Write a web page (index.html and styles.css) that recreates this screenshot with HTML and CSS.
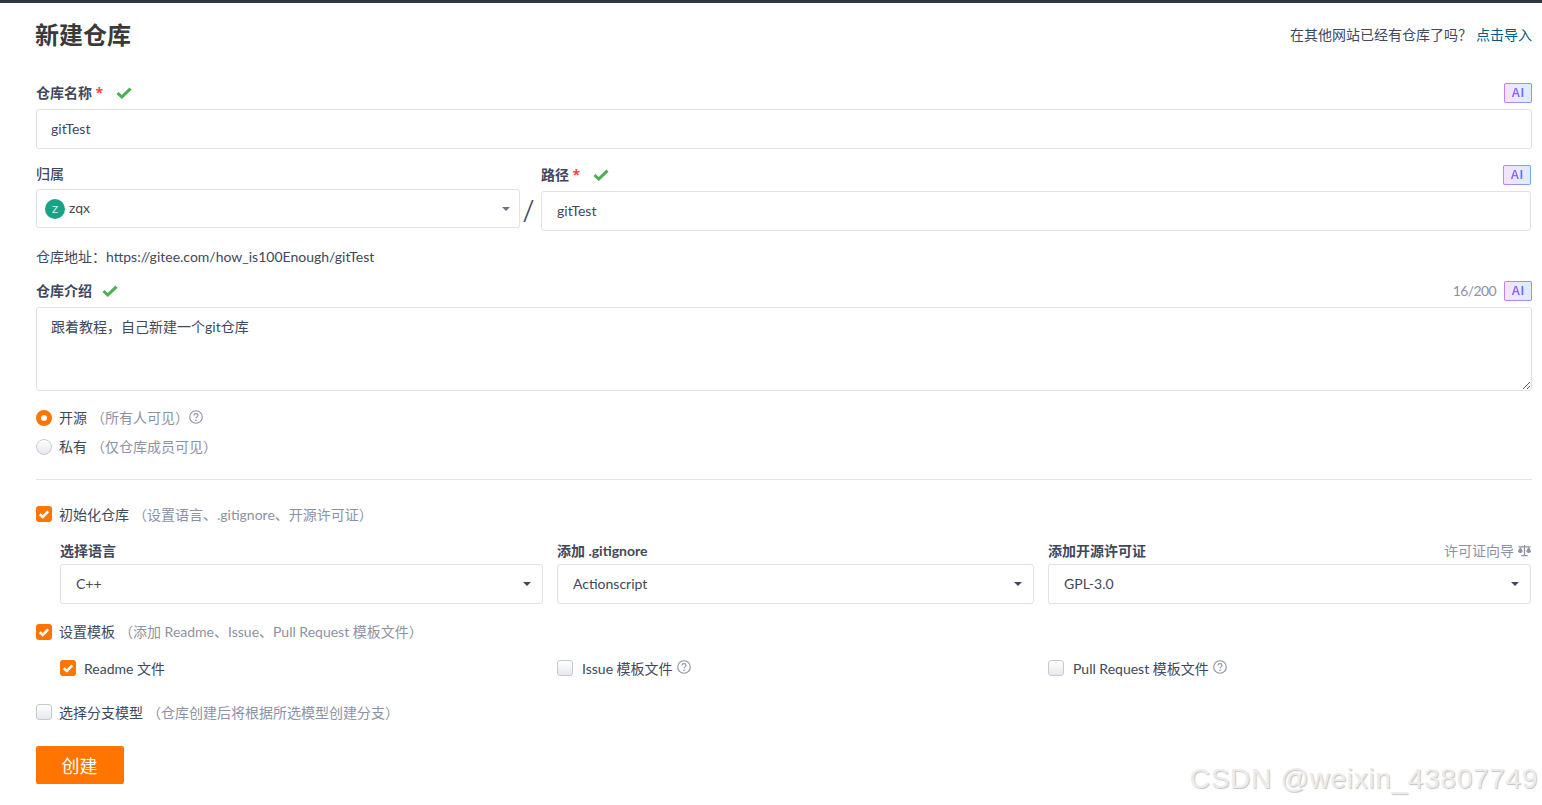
FILE: index.html
```html
<!DOCTYPE html>
<html lang="zh-CN">
<head>
<meta charset="utf-8">
<title>新建仓库</title>
<link rel="stylesheet" href="styles.css">
</head>
<body>
<div class="topbar"></div>
<main class="page">
  <header class="head">
    <h1 class="title">新建仓库</h1>
    <p class="import">在其他网站已经有仓库了吗？<a class="import-link">点击导入</a></p>
  </header>

  <div class="label-row first-label">
    <span class="label">仓库名称 <em class="req">*</em></span>
    <svg class="ok" viewBox="0 0 16 12"><path d="M1.5 6 5.8 10 14.5 1.6"/></svg>
    <span class="spacer"></span>
    <span class="ai"><span class="ai-text">AI</span></span>
  </div>
  <input class="box input" value="gitTest">

  <div class="owner-row">
    <div class="owner-col">
      <div class="label-row"><span class="label light">归属</span></div>
      <div class="box select owner-select">
        <span class="avatar">Z</span><span class="owner-name">zqx</span>
        <span class="caret muted"></span>
      </div>
    </div>
    <span class="slash">/</span>
    <div class="path-col">
      <div class="label-row">
        <span class="label">路径 <em class="req">*</em></span>
        <svg class="ok" viewBox="0 0 16 12"><path d="M1.5 6 5.8 10 14.5 1.6"/></svg>
        <span class="spacer"></span>
        <span class="ai"><span class="ai-text">AI</span></span>
      </div>
      <input class="box input path-input" value="gitTest">
    </div>
  </div>

  <p class="address">仓库地址：https://gitee.com/how_is100Enough/gitTest</p>

  <div class="label-row intro-label">
    <span class="label">仓库介绍</span>
    <svg class="ok" viewBox="0 0 16 12"><path d="M1.5 6 5.8 10 14.5 1.6"/></svg>
    <span class="spacer"></span>
    <span class="count">16/200</span>
    <span class="ai"><span class="ai-text">AI</span></span>
  </div>
  <textarea class="box textarea">跟着教程，自己新建一个git仓库</textarea>

  <div class="line radio-open">
    <span class="radio on"></span><span class="text">开源</span>
    <span class="hint">（所有人可见）</span>
    <svg class="help" viewBox="0 0 14 14"><circle cx="7" cy="7" r="6.3"/><path d="M5 5.4C5 4.2 6 3.6 7 3.6s2 .7 2 1.8C9 6.9 7 6.9 7 8.4"/><circle class="dot" cx="7" cy="10.3" r=".8"/></svg>
  </div>
  <div class="line radio-private">
    <span class="radio"></span><span class="text">私有</span>
    <span class="hint">（仅仓库成员可见）</span>
  </div>

  <hr class="divider">

  <div class="line init-line">
    <span class="check on"><svg viewBox="0 0 16 16"><path d="M3.8 8.2 6.8 11 12.2 5.4"/></svg></span>
    <span class="text">初始化仓库</span>
    <span class="hint">（设置语言、.gitignore、开源许可证）</span>
  </div>

  <div class="tri-grid pick-labels">
    <span class="label">选择语言</span>
    <span class="label">添加 .gitignore</span>
    <div class="license-label">
      <span class="label">添加开源许可证</span>
      <span class="guide">许可证向导
        <svg class="scale" viewBox="0 0 16 14"><path class="pole" d="M8 1v11M4.5 12.5h7M1.5 3h13"/><path class="pan" d="M3.5 3 1 7.5C1 9 2.2 9.6 3.5 9.6S6 9 6 7.5L3.5 3ZM12.5 3 10 7.5c0 1.500 1.200 2.100 2.500 2.100S15 9 15 7.500L12.500 3Z"/></svg>
      </span>
    </div>
  </div>
  <div class="tri-grid picks">
    <div class="box select pick">C++<span class="caret"></span></div>
    <div class="box select pick">Actionscript<span class="caret"></span></div>
    <div class="box select pick">GPL-3.0<span class="caret"></span></div>
  </div>

  <div class="line template-line">
    <span class="check on"><svg viewBox="0 0 16 16"><path d="M3.8 8.2 6.8 11 12.2 5.4"/></svg></span>
    <span class="text">设置模板</span>
    <span class="hint">（添加 Readme、Issue、Pull Request 模板文件）</span>
  </div>

  <div class="tri-grid options">
    <div class="line">
      <span class="check on"><svg viewBox="0 0 16 16"><path d="M3.8 8.2 6.8 11 12.2 5.4"/></svg></span>
      <span class="text narrow">Readme 文件</span>
    </div>
    <div class="line">
      <span class="check"></span>
      <span class="text wide">Issue 模板文件</span>
      <svg class="help spaced" viewBox="0 0 14 14"><circle cx="7" cy="7" r="6.3"/><path d="M5 5.4C5 4.2 6 3.6 7 3.6s2 .7 2 1.8C9 6.9 7 6.9 7 8.4"/><circle class="dot" cx="7" cy="10.3" r=".8"/></svg>
    </div>
    <div class="line">
      <span class="check"></span>
      <span class="text wide">Pull Request 模板文件</span>
      <svg class="help spaced" viewBox="0 0 14 14"><circle cx="7" cy="7" r="6.3"/><path d="M5 5.4C5 4.2 6 3.6 7 3.6s2 .7 2 1.8C9 6.9 7 6.9 7 8.4"/><circle class="dot" cx="7" cy="10.3" r=".8"/></svg>
    </div>
  </div>

  <div class="line branch-line">
    <span class="check"></span>
    <span class="text">选择分支模型</span>
    <span class="hint">（仓库创建后将根据所选模型创建分支）</span>
  </div>

  <button class="submit" type="button">创建</button>
</main>
<div class="watermark">CSDN @weixin_43807749</div>
</body>
</html>
```
FILE: styles.css
```css
* { box-sizing: border-box; }
html, body { margin: 0; height: 100%; overflow: hidden; }
body {
  position: relative;
  background: #fff;
  color: #40485b;
  font: 14px/20px Lato, "Noto Sans CJK SC", sans-serif;
}
.topbar { height: 3px; background: #2f3542; }
.page { padding: 0 10px 0 36px; }
.head { height: 64px; display: flex; align-items: center; justify-content: space-between; }
.title { margin: 0 0 0 -1px; font-size: 24px; line-height: 32px; font-weight: 700; color: #3a3a3a; }
.import { margin: 0; color: #40485b; }
.import-link { margin-left: 4px; color: #005980; }

.label-row { display: flex; align-items: center; height: 20px; }
.first-label { margin-top: 16px; }
.label { font-weight: 700; white-space: pre; }
.label.light { font-weight: 500; }
.req { color: #f5483b; font: 700 14px/20px "Open Sans", sans-serif; }
.req::after { content: ""; display: inline-block; width: 3px; }
.ok { width: 16px; height: 12px; margin-left: 10px; fill: none; stroke: #4caf50; stroke-width: 3; }
.spacer { flex: 1; }
.ai {
  width: 28px; height: 20px; border: 1px solid transparent; border-radius: 2px;
  display: flex; align-items: center; justify-content: center;
  background:
    linear-gradient(90deg, #f3e4fc, #e0ebff) padding-box,
    linear-gradient(90deg, #c77dfa, #6fa3ff) border-box;
}
.ai-text {
  font: 700 12px/14px "Liberation Sans", sans-serif; letter-spacing: .5px;
  color: transparent;
  background: linear-gradient(90deg, #a35cf0, #4d7df5);
  -webkit-background-clip: text; background-clip: text;
}
.count { margin-right: 8px; color: #8c92a4; letter-spacing: -.6px; }

.box { display: block; width: 100%; border: 1px solid #dfe1ea; border-radius: 3px; background: #fff; color: #40485b; font: inherit; outline: none; }
.input { height: 40px; margin-top: 6px; padding: 0 14px 2px; }
.path-input { padding-left: 15px; }

.owner-row { display: flex; align-items: flex-start; padding-right: 1px; }
.owner-col { width: 484px; margin-top: 15px; }
.owner-select { height: 39px; margin-top: 5px; padding-left: 8px; }
.select { display: flex; align-items: center; position: relative; }
.owner-name { position: relative; top: -1px; }
.avatar {
  width: 20px; height: 20px; border-radius: 50%; background: #18a386; color: #d6f2ec;
  display: flex; align-items: center; justify-content: center; font-size: 10px; line-height: 1; margin-right: 4px;
}
.slash { width: 21px; padding-right: 4px; margin-top: 42px; text-align: center; font: 300 32px/38px "Open Sans", sans-serif; color: #40485b; }
.path-col { flex: 1; margin-top: 16px; }
.caret {
  margin-left: auto; margin-right: 11px; width: 0; height: 0;
  border-left: 4px solid transparent; border-right: 4px solid transparent; border-top: 4px solid #40485b;
}
.caret.muted { border-top-color: #6b7285; margin-right: 9px; }

.address { margin: 16px 0 0; }
.intro-label { margin-top: 14px; }
.textarea { height: 84px; margin-top: 6px; padding: 9px 14px; resize: vertical; }

.line { display: flex; align-items: center; height: 20px; white-space: nowrap; }
.text { margin-left: 7px; position: relative; }
.text.narrow { margin-left: 8px; }
.text.wide { margin-left: 9px; }
.hint { margin-left: 4px; color: #8c92a4; position: relative; }
.help { width: 14px; height: 14px; margin-left: 0; margin-top: -2px; fill: none; stroke: #8c92a4; stroke-width: 1.1; }
.help.spaced { margin-left: 4px; }
.help .dot { fill: #8c92a4; stroke: none; }
.radio-open { margin-top: 17px; }
.radio-private { margin-top: 9px; }
.radio { width: 16px; height: 16px; border-radius: 50%; border: 1px solid #c6c9d4; background: linear-gradient(#fff, #e6e8ee); flex: none; }
.radio.on { border: 5px solid #ff7500; background: #fff; }
.check { width: 16px; height: 16px; border: 1px solid #c6c9d4; border-radius: 3px; background: linear-gradient(#fff, #e6e8ee); flex: none; display: block; }
.check.on { border: 0; background: #ff7500; }
.check svg { display: block; width: 16px; height: 16px; fill: none; stroke: #fff; stroke-width: 2.6; }

.divider { margin: 22px 0 0; height: 1px; border: 0; background: #e3e4e9; }
.init-line { margin-top: 24px; }
.init-line .text, .init-line .hint, .options .text, .branch-line .text, .branch-line .hint { top: 1px; }

.tri-grid { display: grid; grid-template-columns: 483px 477px 483px; column-gap: 14px; margin-left: 24px; }
.pick-labels { margin-top: 17px; height: 20px; align-items: center; }
.license-label { display: flex; justify-content: space-between; margin-right: -1px; }
.guide { display: flex; align-items: center; color: #8c92a4; }
.scale { width: 15px; height: 13px; margin-left: 3px; margin-top: -2px; }
.pole { fill: none; stroke: #8c92a4; stroke-width: 1.4; }
.pan { fill: #8c92a4; }
.picks { margin-top: 3px; }
.pick { height: 40px; padding-left: 15px; }

.template-line { margin-top: 18px; }
.options { margin-top: 16px; }
.branch-line { margin-top: 24px; }

.submit {
  display: block; width: 88px; height: 38px; margin-top: 24px; padding: 0 1px 0 0;
  border: 0; border-radius: 2px; background: #ff7500; color: #fff;
  font: 18px/40px Lato, "Noto Sans CJK SC", sans-serif;
}
.watermark {
  position: absolute; right: 4px; bottom: 10px;
  font: 28px/32px "Liberation Sans", sans-serif; letter-spacing: .7px;
  color: #ececec; text-shadow: 1px 1px 1px #c4c4c4;
}
```
